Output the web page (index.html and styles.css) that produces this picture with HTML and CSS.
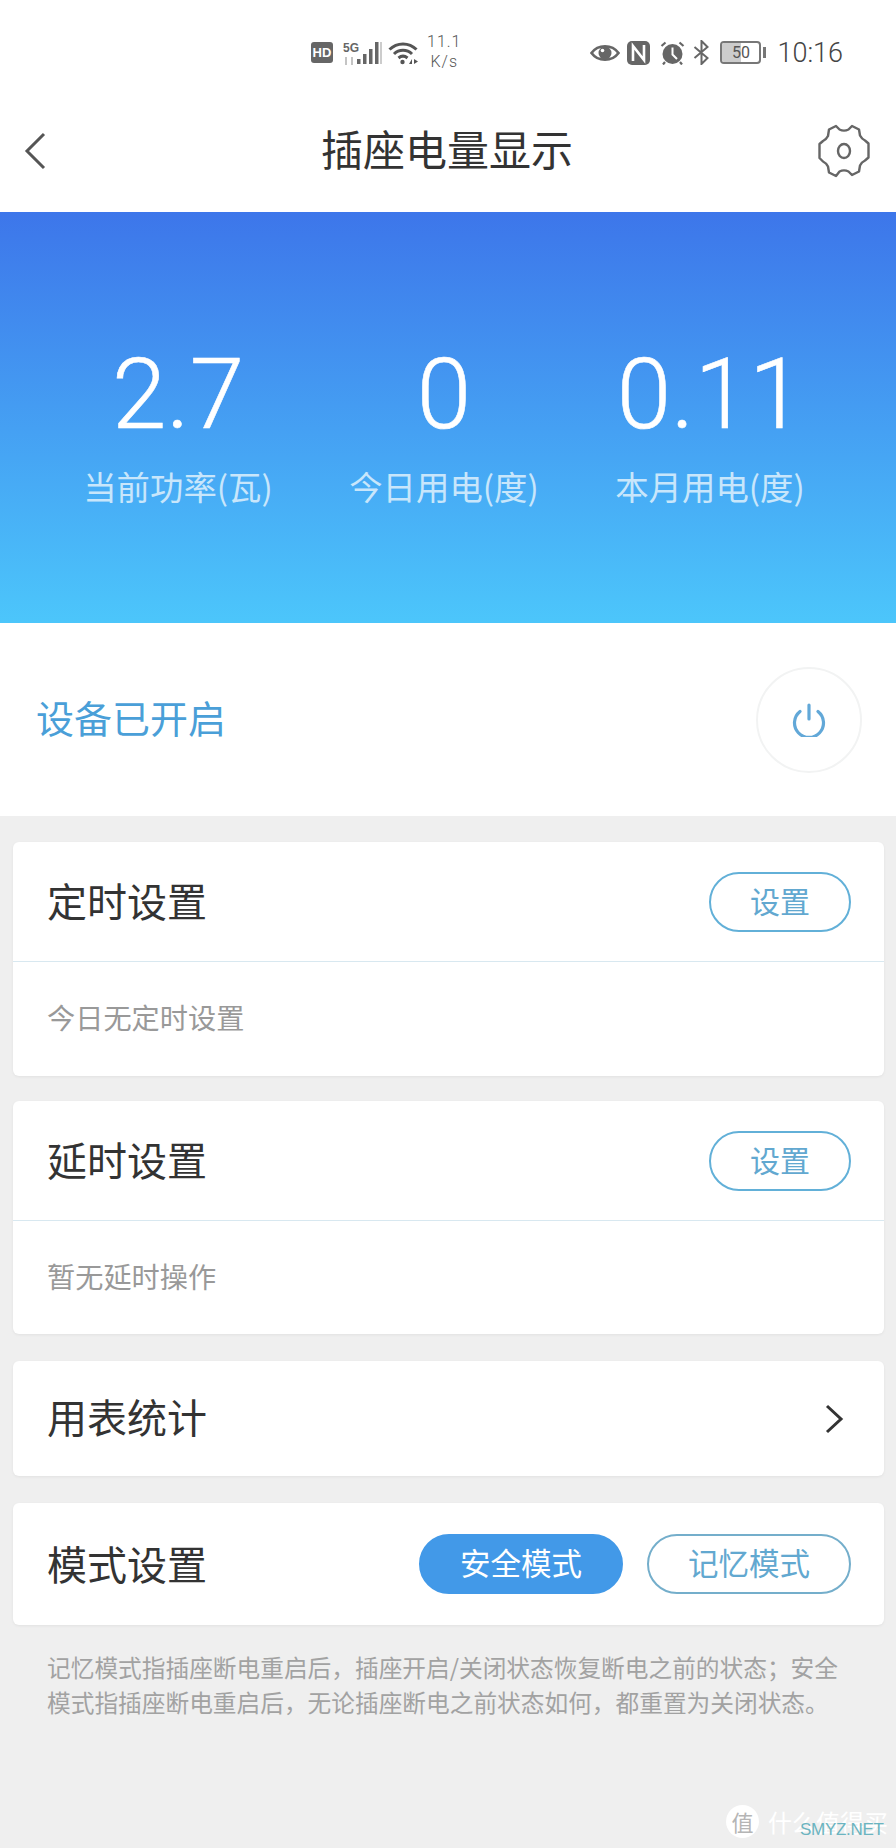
FILE: index.html
```html
<!DOCTYPE html>
<html lang="zh-CN">
<head>
    <meta charset="UTF-8">
    <meta name="viewport" content="width=device-width, initial-scale=1.0">
    <title>插座电量显示</title>
    <link rel="stylesheet" href="styles.css">
</head>
<body>
    <div class="page">
        <!-- phone status bar -->
        <div class="status-bar">
            <div class="status-left">
                <span class="hd-badge">HD</span>
                <div class="signal">
                    <div class="signal-type">
                        <span class="five-g">5G</span>
                        <svg class="updown" width="12" height="8" viewBox="0 0 12 8"><path d="M3 0v8M9 0v8" stroke="#c4c4c4" stroke-width="2"/></svg>
                    </div>
                    <svg class="bars" width="26" height="24" viewBox="0 0 26 24">
                        <rect x="1" y="18" width="3.5" height="5" fill="#666"/>
                        <rect x="7" y="13" width="3.5" height="10" fill="#666"/>
                        <rect x="13" y="8" width="3.5" height="15" fill="#666"/>
                        <rect x="19" y="1" width="3.5" height="22" fill="#666"/>
                        <rect x="24" y="1" width="2" height="22" fill="#ccc"/>
                    </svg>
                </div>
                <svg class="wifi" width="31" height="24" viewBox="0 0 31 24" fill="none" stroke="#555" stroke-width="3">
                    <path d="M1.500 8.500C9 1 21 1 28.500 8.500"/>
                    <path d="M6 13c5-5 13-5 18 0"/>
                    <path d="M10.500 17c3-2.500 6-2.500 9 0"/>
                    <circle cx="14.500" cy="21" r="2.200" fill="#555" stroke="none"/>
                    <path d="M21 23l3-5v5zM26 18l4 2.500-4 2.500z" fill="#555" stroke="none"/>
                </svg>
                <div class="speed"><span>11.1</span><span>K/s</span></div>
            </div>
            <div class="status-right">
                <svg class="eye" width="30" height="20" viewBox="0 0 30 20">
                    <path d="M1.500 10C8 1 22 1 28.500 10 22 19 8 19 1.500 10z" fill="none" stroke="#666" stroke-width="2.600"/>
                    <circle cx="15" cy="10" r="6.500" fill="#666"/>
                    <circle cx="12.500" cy="7.500" r="1.800" fill="#fff"/>
                </svg>
                <svg class="nfc" width="23" height="24" viewBox="0 0 23 24">
                    <rect width="23" height="24" rx="5" fill="#666"/>
                    <path d="M6 20V5l11 14V4" fill="none" stroke="#fff" stroke-width="2.600"/>
                </svg>
                <svg class="alarm" width="25" height="24" viewBox="0 0 25 24">
                    <circle cx="12.500" cy="13" r="10" fill="#666"/>
                    <path d="M12.500 6.500v7l4.500 4.500" fill="none" stroke="#fff" stroke-width="2"/>
                    <path d="M1.500 5l4-3.500M23.500 5l-4-3.500M5 21l-2 2.500M20 21l2 2.500" stroke="#666" stroke-width="2.200"/>
                </svg>
                <svg class="bluetooth" width="17" height="25" viewBox="0 0 17 25" fill="none" stroke="#666" stroke-width="2">
                    <path d="M1.500 7l13 11-6 6V1l6 6-13 11"/>
                </svg>
                <div class="battery">
                    <div class="battery-body"><span class="battery-fill"></span><span class="battery-num">50</span></div>
                    <span class="battery-nub"></span>
                </div>
                <span class="clock">10:16</span>
            </div>
        </div>

        <!-- title bar -->
        <div class="nav-bar">
            <svg class="back-icon" width="22" height="38" viewBox="0 0 22 38" fill="none" stroke="#555" stroke-width="3">
                <path d="M20 2L3 19l17 17"/>
            </svg>
            <h1 class="nav-title">插座电量显示</h1>
            <svg class="gear-icon" width="52" height="54" viewBox="0 0 52 54" fill="none" stroke="#666" stroke-width="2.400">
                <path d="M18 2l3.500 3.500c3 1.500 6 1.500 9 0L34 2l7 3.500 1 6c1 2 3 4 5 5l3.500 3v14l-3.500 3c-2 1-4 3-5 5l-1 6-7 3.500-3.500-3.500c-3-1.500-6-1.500-9 0L18 52l-7-3.500-1-6c-1-2-3-4-5-5L1.500 34V20L5 17c2-1 4-3 5-5l1-6.500z" stroke-linejoin="round"/>
                <ellipse cx="26" cy="27" rx="6" ry="7"/>
            </svg>
        </div>

        <!-- power numbers -->
        <div class="banner">
            <div class="stat">
                <div class="stat-value">2.7</div>
                <div class="stat-label">当前功率(瓦)</div>
            </div>
            <div class="stat">
                <div class="stat-value">0</div>
                <div class="stat-label">今日用电(度)</div>
            </div>
            <div class="stat">
                <div class="stat-value">0.11</div>
                <div class="stat-label">本月用电(度)</div>
            </div>
        </div>

        <div class="power-row">
            <span class="power-text">设备已开启</span>
            <div class="power-btn">
                <svg width="36" height="34" viewBox="0 0 36 34" fill="none" stroke="#62a8d8" stroke-width="3.200" stroke-linecap="round">
                    <path d="M9 8.500a14.500 14.500 0 1 0 18 0"/>
                    <path d="M18 2v14"/>
                </svg>
            </div>
        </div>

        <div class="card card-timer">
            <div class="card-head">
                <span class="card-title">定时设置</span>
                <button class="pill-btn">设置</button>
            </div>
            <div class="card-body">今日无定时设置</div>
        </div>

        <div class="card card-delay">
            <div class="card-head">
                <span class="card-title">延时设置</span>
                <button class="pill-btn">设置</button>
            </div>
            <div class="card-body">暂无延时操作</div>
        </div>

        <div class="card card-stats">
            <span class="card-title">用表统计</span>
            <svg width="20" height="30" viewBox="0 0 20 30" fill="none" stroke="#333" stroke-width="3">
                <path d="M3 2l14 13L3 28"/>
            </svg>
        </div>

        <div class="card card-mode">
            <span class="card-title">模式设置</span>
            <div class="mode-btns">
                <button class="mode-btn mode-btn-on">安全模式</button>
                <button class="mode-btn">记忆模式</button>
            </div>
        </div>

        <p class="note">记忆模式指插座断电重启后，插座开启/关闭状态恢复断电之前的状态；安全模式指插座断电重启后，无论插座断电之前状态如何，都重置为关闭状态。</p>

        <!-- watermark over the corner -->
        <div class="watermark">
            <span class="wm-circle">值</span>
            <span class="wm-text">什么值得买</span>
            <span class="wm-site">SMYZ.NET</span>
        </div>
    </div>
</body>
</html>
```

FILE: styles.css
```css
* {
    box-sizing: border-box;
}
body {
    margin: 0;
    font-family: "Noto Sans CJK SC", "Noto Sans", sans-serif;
    background-color: #efefef;
    color: #333;
}
.page {
    position: relative;
    width: 896px;
    height: 1848px;
    overflow: hidden;
    background-color: #efefef;
}

/* status bar */
.status-bar {
    display: flex;
    align-items: center;
    justify-content: space-between;
    height: 90px;
    padding: 15px 53px 0 311px;
    background-color: #fff;
    color: #666;
}
.status-left,
.status-right {
    display: flex;
    align-items: center;
}
.hd-badge {
    width: 22px;
    height: 21px;
    border-radius: 3px;
    background-color: #666;
    color: #fff;
    font-family: "Liberation Sans", sans-serif;
    font-size: 13px;
    font-weight: 700;
    line-height: 21px;
    text-align: center;
}
.signal {
    display: flex;
    align-items: flex-end;
    margin-left: 10px;
}
.signal-type {
    display: flex;
    flex-direction: column;
    gap: 3px;
    width: 13px;
}
.five-g {
    font-family: "Liberation Sans", sans-serif;
    font-size: 12px;
    font-weight: 700;
    line-height: 11px;
    color: #666;
}
.bars {
    display: block;
}
.wifi {
    margin-left: 6px;
}
.speed {
    display: flex;
    flex-direction: column;
    align-items: center;
    margin-left: 8px;
    margin-bottom: 2px;
    font-family: Roboto, sans-serif;
    font-size: 16px;
    font-weight: 300;
    line-height: 20px;
    letter-spacing: 1px;
    color: #555;
}
.nfc {
    margin-left: 7px;
}
.alarm {
    margin-left: 10px;
}
.bluetooth {
    margin-left: 8px;
}
.battery {
    display: flex;
    align-items: center;
    margin-left: 10px;
}
.battery-body {
    position: relative;
    width: 41px;
    height: 23px;
    border: 2px solid #777;
    border-radius: 4px;
    overflow: hidden;
}
.battery-fill {
    position: absolute;
    left: 0;
    top: 0;
    bottom: 0;
    width: 50%;
    background-color: #cccccc;
}
.battery-num {
    position: absolute;
    left: 0;
    right: 0;
    top: 0;
    font-family: Roboto, sans-serif;
    font-size: 16px;
    line-height: 19px;
    text-align: center;
    color: #555;
}
.battery-nub {
    width: 3px;
    height: 11px;
    margin-left: 2px;
    background-color: #777;
}
.clock {
    margin-left: 11px;
    font-family: Roboto, sans-serif;
    font-size: 27px;
    font-weight: 300;
    color: #444;
}

/* title bar */
.nav-bar {
    display: grid;
    grid-template-columns: 1fr auto 1fr;
    align-items: center;
    height: 122px;
    padding: 0 26px 0 24px;
    background-color: #fff;
}
.gear-icon {
    justify-self: end;
}
.nav-title {
    margin: 0;
    padding-bottom: 8px;
    font-size: 42px;
    font-weight: 400;
    color: #333;
}

/* blue header */
.banner {
    display: grid;
    grid-template-columns: repeat(3, 1fr);
    height: 411px;
    padding: 0 53px 0 45px;
    background: linear-gradient(180deg, #3d76ea 0%, #4cc6fb 100%);
}
.stat {
    padding-top: 139px;
    text-align: center;
}
.stat-value {
    font-family: Roboto, sans-serif;
    font-size: 98px;
    font-weight: 300;
    line-height: 88px;
    color: #fff;
    -webkit-text-stroke: 0.6px #fff;
}
.stat-label {
    margin-top: 24px;
    font-size: 33.4px;
    line-height: 46px;
    color: #c8e6fb;
    white-space: nowrap;
}

/* on/off row */
.power-row {
    display: flex;
    align-items: center;
    justify-content: space-between;
    height: 193px;
    padding: 0 34px 0 36px;
    background-color: #fff;
}
.power-text {
    padding-bottom: 6px;
    font-size: 38px;
    color: #4a9fd8;
}
.power-btn {
    display: flex;
    align-items: center;
    justify-content: center;
    width: 106px;
    height: 106px;
    border: 2px solid #f2f3f3;
    border-radius: 50%;
}

/* cards */
.card {
    width: 871px;
    margin-left: 13px;
    border-radius: 6px;
    background-color: #fff;
    box-shadow: 0 1px 3px rgba(0, 0, 0, 0.06);
}
.card-timer {
    margin-top: 26px;
    height: 234px;
}
.card-delay {
    margin-top: 25px;
    height: 233px;
}
.card-head {
    display: flex;
    align-items: center;
    justify-content: space-between;
    height: 120px;
    padding: 0 33px 0 34px;
    border-bottom: 1px solid #d8e8f0;
}
.card-title {
    padding-bottom: 3px;
    font-size: 40px;
    color: #333;
}
.pill-btn {
    width: 142px;
    height: 60px;
    padding: 0 0 4px;
    border: 2px solid #62b0d8;
    border-radius: 30px;
    background-color: #fff;
    font-family: inherit;
    font-size: 30px;
    color: #62a8d0;
}
.card-body {
    padding: 35px 34px 0;
    font-size: 28.2px;
    line-height: 40px;
    color: #999;
}
.card-stats {
    display: flex;
    align-items: center;
    justify-content: space-between;
    height: 115px;
    margin-top: 27px;
    padding: 0 40px 0 34px;
}
.card-stats .card-title {
    padding-bottom: 6px;
}
.card-mode {
    display: flex;
    align-items: center;
    justify-content: space-between;
    height: 122px;
    margin-top: 27px;
    padding: 0 33px 0 34px;
}
.mode-btns {
    display: flex;
    gap: 24px;
}
.mode-btn {
    width: 204px;
    height: 60px;
    padding: 0 0 4px;
    border: 2px solid #74aecb;
    border-radius: 30px;
    background-color: #fff;
    font-family: inherit;
    font-size: 30.5px;
    color: #62a8d0;
}
.mode-btn-on {
    border-color: #4299e8;
    background-color: #4299e8;
    color: #fff;
}
.note {
    margin: 25px 0 0;
    padding: 0 47px;
    font-size: 23.7px;
    line-height: 35px;
    color: #a2a2a2;
}

/* watermark */
.watermark {
    position: absolute;
    left: 726px;
    top: 1805px;
    display: flex;
    align-items: center;
    width: 170px;
    height: 33px;
}
.wm-circle {
    width: 33px;
    height: 33px;
    border-radius: 50%;
    background-color: #fff;
    font-size: 22px;
    line-height: 33px;
    text-align: center;
    color: #b5b5b5;
}
.wm-text {
    margin-left: 9px;
    font-size: 24px;
    color: #fff;
}
.wm-site {
    position: absolute;
    left: 74px;
    top: 15px;
    font-family: "Liberation Sans", sans-serif;
    font-size: 17px;
    line-height: 20px;
    letter-spacing: -0.3px;
    color: #6bb4c0;
}
```
